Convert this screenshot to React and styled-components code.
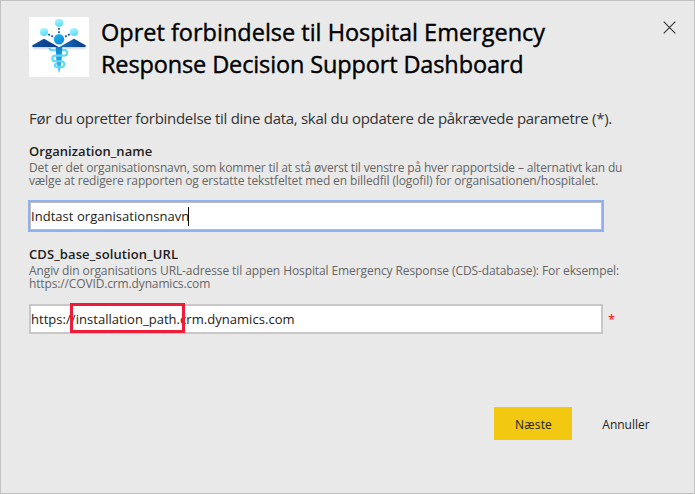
import React from 'react';
import styled, { createGlobalStyle } from 'styled-components';

const GlobalStyle = createGlobalStyle`
  * { box-sizing: border-box; }
  body { margin: 0; background: #e9e9e9; }
`;

const Dialog = styled.main`
  width: 695px;
  height: 494px;
  padding: 16px 18px 0 28px;
  border: 1px solid #c1c1c1;
  background: #e9e9e9;
  display: flex;
  flex-direction: column;
  font-family: 'Open Sans', 'Noto Sans', sans-serif;
  color: #212121;
  overflow: hidden;
`;

const Header = styled.header`
  display: flex;
  height: 64px;
`;

const Logo = styled.svg`
  width: 60px;
  height: 60px;
  flex: none;
  background: #fff;
`;

const Title = styled.h1`
  flex: 1;
  margin: -1px 0 0 12px;
  font-size: 23.5px;
  font-weight: 400;
  color: #000;
  -webkit-text-stroke: 0.4px #000;
`;

const Line = styled.span`
  display: block;
  white-space: nowrap;
  letter-spacing: ${(p) => p.$spacing || 0}px;
`;

const TitleLine = styled(Line)`
  line-height: 32px;
`;

const CloseButton = styled.button`
  width: 13px;
  height: 13px;
  margin-top: 4px;
  padding: 0;
  border: 0;
  background: none;
  svg { display: block; }
`;

const Intro = styled.p`
  margin: 26px 0 0;
  font-size: 15px;
  line-height: 22px;
  color: #333;
`;

const Field = styled.section`
  margin-top: ${(p) => p.$gap}px;
`;

const Label = styled.label`
  display: block;
  font-size: 13px;
  font-weight: 600;
  line-height: 18px;
  letter-spacing: ${(p) => p.$spacing}px;
`;

const Description = styled.p`
  margin: 1px 0 0;
  font-size: 12px;
  line-height: 13px;
  color: #666;
`;

const InputRow = styled.div`
  display: flex;
  align-items: center;
  margin-top: 14px;
`;

const Input = styled.div`
  position: relative;
  display: flex;
  align-items: center;
  width: 574px;
  height: 30px;
  border: 2px solid #c8c8c8;
  background: #fff;
  font-size: 13px;
  letter-spacing: 0.04px;
  white-space: nowrap;
`;

const FocusedInput = styled(Input)`
  width: 572px;
  height: 28px;
  margin: 1px;
  border: 1px solid #bdbdb5;
  box-shadow: 0 0 0 2px #8fb2ee;
`;

const Caret = styled.i`
  width: 1px;
  height: 19px;
  margin-left: -1px;
  background: #000;
`;

const Highlight = styled.span`
  position: absolute;
  left: 39px;
  top: -3px;
  width: 115px;
  height: 30px;
  border: 3px solid #ee1c38;
`;

const Required = styled.span`
  margin-left: 5px;
  font-size: 13px;
  line-height: 18px;
  color: #f00;
`;

const Actions = styled.footer`
  display: flex;
  gap: 8px;
  margin: 73px 0 0 465px;
`;

const Button = styled.button`
  width: ${(p) => p.$width}px;
  height: 33px;
  padding: 2px 0 0 1px;
  border: 0;
  background: ${(p) => (p.$primary ? '#f2c811' : 'transparent')};
  font: 400 12px/18px 'Open Sans', sans-serif;
  letter-spacing: ${(p) => (p.$primary ? 0.2 : 0)}px;
  color: #212121;
`;

function HospitalLogo() {
  return (
    <Logo viewBox="0 0 60 60">
      <defs>
        <linearGradient id="wing" x1="0" x2="1">
          <stop offset="0" stopColor="#0a4fa0" />
          <stop offset="1" stopColor="#0a3a88" />
        </linearGradient>
        <linearGradient id="wingRight" x1="0" x2="1">
          <stop offset="0" stopColor="#1a72c6" />
          <stop offset="1" stopColor="#073a86" />
        </linearGradient>
        <linearGradient id="ball" x1="0" y1="0" x2="0.4" y2="1">
          <stop offset="0" stopColor="#b4fbff" />
          <stop offset="1" stopColor="#5bdcfb" />
        </linearGradient>
        <linearGradient id="head" x1="0.2" y1="0" x2="0.8" y2="1">
          <stop offset="0" stopColor="#1fb4ec" />
          <stop offset="1" stopColor="#0e86d4" />
        </linearGradient>
        <linearGradient id="staff" x1="0" y1="0" x2="0" y2="1">
          <stop offset="0" stopColor="#0e84d0" />
          <stop offset="0.6" stopColor="#25a8e4" />
          <stop offset="1" stopColor="#63d8f8" />
        </linearGradient>
        <filter id="shade" x="-20%" y="-20%" width="140%" height="170%">
          <feDropShadow dx="0" dy="1.2" stdDeviation="1" floodColor="#1b3550" floodOpacity="0.3" />
        </filter>
      </defs>
      <path d="M30 11V17.5" stroke="#15549c" strokeWidth="1.8" strokeDasharray="1.7 1.5" />
      <path d="M19.3 17.3l5.5 2.7M40.7 17.3l-5.5 2.7" stroke="#15549c" strokeWidth="1.8" strokeDasharray="1.8 1.6" />
      <circle cx="30" cy="5.8" r="4.1" fill="url(#ball)" />
      <circle cx="15" cy="15" r="4.1" fill="url(#ball)" />
      <circle cx="45" cy="15" r="4.1" fill="url(#ball)" />
      <path d="M26.7 30H33.3L32.6 44L30.6 55.5H29.7L27.4 44Z" fill="url(#staff)" />
      <path
        d="M20.5 31C20.5 33.5 23 33.3 27 33.3M33 33H35.2C39.2 33 39.2 38.6 35.2 38.6H26.5C22.3 38.6 22.3 44.3 26.5 44.3H32.5C36.3 44.3 36.3 50.3 32 50.3H28.5C25 50.3 24.8 46.6 28 46.8"
        fill="none"
        stroke="#62d8f7"
        strokeWidth="2.1"
      />
      <g filter="url(#shade)">
        <path d="M3.5 28.3L15 21.7L29.5 30H4Q2.6 29.8 3.5 28.3Z" fill="url(#wing)" />
        <path d="M56.5 28.3L45 21.7L30.5 30H56Q57.4 29.8 56.5 28.3Z" fill="url(#wingRight)" />
      </g>
      <circle cx="30" cy="22.2" r="5.2" fill="url(#head)" />
    </Logo>
  );
}

export default function App() {
  return (
    <>
      <GlobalStyle />
      <Dialog>
        <Header>
          <HospitalLogo />
          <Title>
            <TitleLine>Opret forbindelse til Hospital Emergency</TitleLine>
            <TitleLine $spacing={-0.13}>Response Decision Support Dashboard</TitleLine>
          </Title>
          <CloseButton aria-label="Luk">
            <svg width="13" height="13" viewBox="0 0 13 13">
              <path d="M.7.7L12.3 12.3M12.3.7L.7 12.3" stroke="#333" strokeWidth="1.1" />
            </svg>
          </CloseButton>
        </Header>
        <Intro>
          <Line $spacing={-0.29}>
            Før du opretter forbindelse til dine data, skal du opdatere de påkrævede parametre (*).
          </Line>
        </Intro>
        <Field $gap={13}>
          <Label $spacing={0.05}>Organization_name</Label>
          <Description>
            <Line $spacing={-0.16}>
              Det er det organisationsnavn, som kommer til at stå øverst til venstre på hver rapportside – alternativt kan du
            </Line>
            <Line $spacing={-0.125}>
              vælge at redigere rapporten og erstatte tekstfeltet med en billedfil (logofil) for organisationen/hospitalet.
            </Line>
          </Description>
          <InputRow>
            <FocusedInput>
              Indtast organisationsnavn
              <Caret />
            </FocusedInput>
          </InputRow>
        </Field>
        <Field $gap={14}>
          <Label $spacing={0.1}>CDS_base_solution_URL</Label>
          <Description>
            <Line $spacing={-0.095}>
              Angiv din organisations URL-adresse til appen Hospital Emergency Response (CDS-database): For eksempel:
            </Line>
            <Line $spacing={-0.14}>https://COVID.crm.dynamics.com</Line>
          </Description>
          <InputRow>
            <Input>
              https://installation_path.crm.dynamics.com
              <Highlight />
            </Input>
            <Required>*</Required>
          </InputRow>
        </Field>
        <Actions>
          <Button $primary $width={78}>Næste</Button>
          <Button $width={91}>Annuller</Button>
        </Actions>
      </Dialog>
    </>
  );
}
